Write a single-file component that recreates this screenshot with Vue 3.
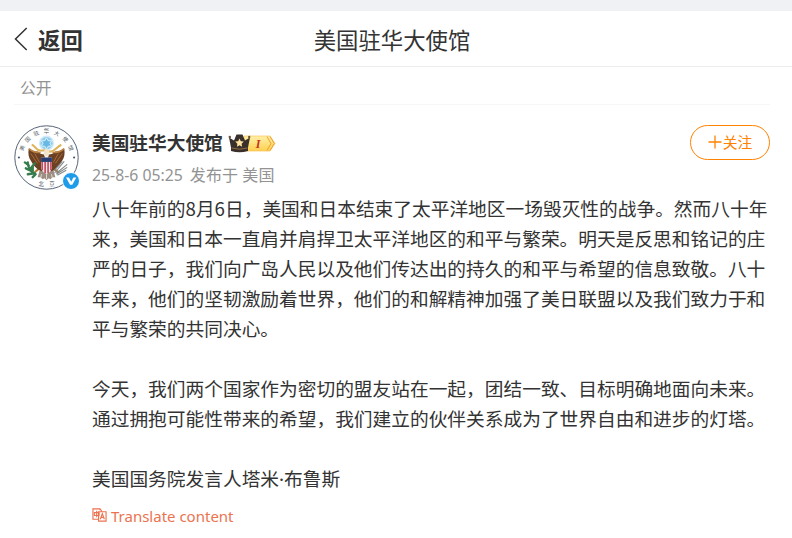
<script setup>
import {ref} from 'vue';

const account = '美国驻华大使馆';
const following = ref(false);

const lines = [
	'八十年前的8月6日，美国和日本结束了太平洋地区一场毁灭性的战争。然而八十年',
	'来，美国和日本一直肩并肩捍卫太平洋地区的和平与繁荣。明天是反思和铭记的庄',
	'严的日子，我们向广岛人民以及他们传达出的持久的和平与希望的信息致敬。八十',
	'年来，他们的坚韧激励着世界，他们的和解精神加强了美日联盟以及我们致力于和',
	'平与繁荣的共同决心。',
	'',
	'今天，我们两个国家作为密切的盟友站在一起，团结一致、目标明确地面向未来。',
	'通过拥抱可能性带来的希望，我们建立的伙伴关系成为了世界自由和进步的灯塔。',
	'',
];

// characters around the rim of the seal, placed by angle
const rim = [...'美国驻华大使馆'].map((char, i) => ({char, angle: -69 + i * 23}));
</script>

<template>
	<div class="page">
		<header class="topbar">
			<a class="back">
				<svg class="back-icon" viewBox="0 0 14 24"><path d="M12.7 1L1.5 12l11.2 11" /></svg>
				<span>返回</span>
			</a>
			<h1 class="title">{{ account }}</h1>
		</header>

		<div class="visibility">公开</div>

		<article class="post">
			<div class="avatar">
				<svg class="seal" viewBox="0 0 66 66">
					<circle cx="33" cy="33" r="32.2" fill="#fff" stroke="#526174" stroke-width="1" />
					<text v-for="item in rim" :key="item.angle" class="rim" x="33" y="8.5" :transform="`rotate(${item.angle} 33 33)`">{{ item.char }}</text>
					<text class="rim" x="27.500" y="62">北</text>
					<text class="rim" x="38.500" y="62">京</text>
					<circle cx="5" cy="33" r="1.1" fill="#435671" />
					<circle cx="61" cy="33" r="1.1" fill="#435671" />
					<!-- stars above the eagle -->
					<circle cx="33" cy="18.5" r="7" fill="#8fcdef" stroke="#d3ebf8" stroke-width="1.5" />
					<path d="M33 13l1.700 3h3.500L36.500 18.500l1.700 3h-3.500L33 24.500l-1.700-3h-3.500l1.700-3-1.700-2.500h3.500z" fill="#68b8e4" stroke="#f2faff" stroke-width=".8" />
					<!-- tail and legs -->
					<path d="M27 43l-3 10 3 0 2 2 2-1 2 2 2-2 2 1 2-2 3 0-3-10z" fill="#9c8e80" />
					<path d="M28 50l-1 4M38 50l1 4M33 50v5" stroke="#e0dbd5" stroke-width="1" />
					<path d="M27 43l-6 5M39 43l6 5" stroke="#b57a35" stroke-width="2.2" />
					<!-- wings -->
					<path d="M31 30c-3 0-5-1-7-3-3 0-6-1-9-3-1 5 0 9 2 12l3 5 4 4 4 2 5-4z" fill="#6b4023" />
					<path d="M35 30c3 0 5-1 7-3 3 0 6-1 9-3 1 5 0 9-2 12l-3 5-4 4-4 2-5-4z" fill="#6b4023" />
					<path d="M15 24c3 3 7 4 12 4M51 24c-3 3-7 4-12 4" stroke="#b98040" stroke-width="1.6" fill="none" />
					<path d="M17 29l7 10M21 29l5 9M49 29l-7 10M45 29l-5 9" stroke="#a66d3b" stroke-width="1" />
					<!-- ribbon in the beak -->
					<path d="M18 20c4 1 4 6 9 6 3 0 5-1 9 1 5 1 6-4 12-7" stroke="#dfb45d" stroke-width="2.2" fill="none" />
					<path d="M31 25l2-1 3 2-1 6h-4l-1-3z" fill="#f1e5cc" />
					<!-- shield -->
					<path d="M27.500 33h11v11q-1 4-5.500 6-4.500-2-5.500-6z" fill="#f1e4e6" />
					<path d="M28.600 37v9M31.600 37v12M34.600 37v12M37.500 37v9" stroke="#bd3b50" stroke-width="1.5" />
					<path d="M27.500 33h11v4.500h-11z" fill="#263d73" />
					<!-- olive branch and arrows -->
					<path d="M22 50c-5-3-8-7-8-12M21 49l-7 1M18 47l-6-3M17 44l4-5M15 41l-4-3M19 47v-5M22 50l-3 3" stroke="#367d4d" stroke-width="2.400" stroke-linecap="round" fill="none" />
					<path d="M41 49l10-12M43 49l11-9M43 50l11-7M40 47l9-10M44 51l9-5" stroke="#85898a" stroke-width="1.100" />
				</svg>
				<svg class="verified" viewBox="0 0 18 18">
					<circle cx="9" cy="9" r="8.5" fill="#1e9be9" stroke="#fff" />
					<path d="M4 5.500h3L9.200 9.700l2.100-4.200h3L10.300 12.700H8z" fill="#fff" />
				</svg>
			</div>

			<div class="main">
				<div class="head">
					<div>
						<div class="name-row">
							<span class="name">{{ account }}</span>
							<svg class="level" viewBox="0 0 48 20">
								<defs>
									<linearGradient id="gold" x1="0" y1="0" x2="0" y2="1">
										<stop offset="0" stop-color="#fff0a8" />
										<stop offset="1" stop-color="#ffd050" />
									</linearGradient>
								</defs>
								<path d="M16 3h26l5 7.500-5 7.500H16z" fill="url(#gold)" stroke="#fac45b" stroke-width=".7" />
								<path d="M39 3.500l4 7-4 7M42 3.500l4.300 7-4.300 7" fill="none" stroke="#ed9f30" stroke-width="1" />
								<path d="M1 4.500l5 3 2.500-6h6l2.500 6 5-3-2 10v3.500q-8.500 2.500-17 0v-3.500z" fill="#3a302b" />
								<path d="M3.500 15q8 2.400 16 0" fill="none" stroke="#a17a48" stroke-width=".8" />
								<circle cx="1.800" cy="4" r="1.200" fill="#6b5138" />
								<circle cx="21.200" cy="4" r="1.200" fill="#6b5138" />
								<path d="M11.500 5.500l1.300 2.700 3 .4-2.200 2.100.5 3-2.600-1.400-2.600 1.400.5-3-2.200-2.100 3-.4z" fill="#ffe5a0" />
								<text x="30" y="14.500" class="level-text">I</text>
							</svg>
						</div>
						<div class="meta"><span class="time">25-8-6 05:25</span><span class="place">发布于 美国</span></div>
					</div>
					<button class="follow" @click="following = !following">
						<svg class="plus" viewBox="0 0 14 14"><path d="M7 .5v13M.5 7h13" /></svg>
						<span>{{ following ? '已关注' : '关注' }}</span>
					</button>
				</div>

				<div class="content">
					<p v-for="(line, i) in lines" :key="i">{{ line }}</p>
					<p>美国国务院发言人塔米<span class="dot">·</span>布鲁斯</p>
				</div>

				<a class="translate">
					<svg viewBox="0 0 16 16">
						<path d="M8.500 3V1.500H1v11h6M8.500 1.500l2 2.500M7 4.500h8v10H7z" />
						<path d="M2.500 5.500h5v3h-5zM5 3.500v7M8.800 12.500l2.200-6 2.200 6M9.500 10.500h3" />
					</svg>
					<span>Translate content</span>
				</a>
			</div>
		</article>
	</div>
</template>

<style>
body {
	margin: 0;
	background: #fff;
}
</style>

<style scoped>
.page {
	box-sizing: border-box;
	width: 792px;
	height: 538px;
	overflow: hidden;
	border-top: 11px solid #f0f1f5;
	background: #fff;
	color: #333;
	font-family: 'Noto Sans CJK SC', sans-serif;
}

.topbar {
	box-sizing: border-box;
	display: grid;
	grid-template-columns: 1fr auto 1fr;
	align-items: center;
	height: 56px;
	padding: 0 22px 0 14px;
	border-bottom: 1px solid #ededee;
}
.back {
	display: flex;
	align-items: center;
	gap: 10px;
	font-size: 22.4px;
	line-height: 32px;
	font-weight: 700;
	cursor: pointer;
}
.back-icon {
	width: 14px;
	height: 24px;
	fill: none;
	stroke: #333;
	stroke-width: 1.5;
}
.title {
	margin: 0;
	font-size: 22.4px;
	line-height: 32px;
	font-weight: 400;
}

.visibility {
	box-sizing: border-box;
	height: 38px;
	margin: 0 22px 0 14px;
	padding: 9px 6px 0;
	border-bottom: 1px solid #f7f7f7;
	color: #939393;
	font-size: 15.8px;
	line-height: 24px;
}

.post {
	display: flex;
	gap: 13px;
	padding: 20px 22px 0 14px;
}
.avatar {
	position: relative;
	flex: none;
	width: 65px;
	height: 65px;
}
.seal {
	display: block;
	width: 65px;
	height: 65px;
}
.rim {
	fill: #4f5863;
	font-size: 5.5px;
	text-anchor: middle;
}
.verified {
	position: absolute;
	right: -1px;
	bottom: 0;
	width: 18px;
	height: 18px;
}

.main {
	flex: 1;
	min-width: 0;
}
.head {
	display: flex;
	justify-content: space-between;
	height: 68px;
}
.name-row {
	display: flex;
	align-items: center;
	gap: 5px;
	height: 36px;
}
.name {
	padding-bottom: 2px;
	font-size: 18.7px;
	line-height: 28px;
	font-weight: 700;
}
.level {
	width: 48px;
	height: 20px;
}
.level-text {
	fill: #c4351b;
	font: italic bold 12px 'Liberation Serif', serif;
	text-anchor: middle;
}
.meta {
	display: flex;
	gap: 7px;
	color: #939393;
	font-family: 'Noto Sans', 'Noto Sans CJK SC', sans-serif;
	font-size: 15.8px;
	line-height: 28px;
}
.place {
	font-size: 16px;
	letter-spacing: 0.1px;
}
.follow {
	box-sizing: border-box;
	display: flex;
	align-items: center;
	justify-content: center;
	gap: 1px;
	width: 80px;
	height: 35px;
	padding: 0 0 1px;
	border: 1px solid #ff8200;
	border-radius: 18px;
	background: #fff;
	color: #ff8200;
	font: 400 14.8px/22px 'Noto Sans CJK SC', sans-serif;
	cursor: pointer;
}
.plus {
	width: 14px;
	height: 14px;
	fill: none;
	stroke: #ff8200;
	stroke-width: 1.3;
}

.content {
	font-size: 18.72px;
	line-height: 30px;
	white-space: nowrap;
}
.content p {
	height: 30px;
	margin: 0;
}
.dot {
	font-family: 'Noto Sans', sans-serif;
}
.translate {
	display: flex;
	align-items: center;
	gap: 4px;
	height: 24px;
	margin-top: 11px;
	color: #eb7350;
	font: 15px/24px 'Noto Sans', sans-serif;
	cursor: pointer;
}
.translate svg {
	width: 15px;
	height: 16px;
	margin-bottom: 2px;
	fill: none;
	stroke: #eb7350;
	stroke-width: 1.2;
}
</style>
